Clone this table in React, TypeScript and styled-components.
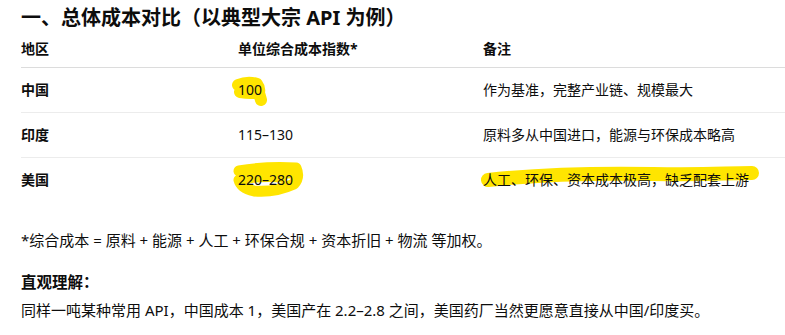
import styled, { createGlobalStyle } from 'styled-components';

const Global = createGlobalStyle`
  body {
    margin: 0;
    background: #fff;
    color: #0d0d0d;
    font-family: "Noto Sans", "Noto Sans CJK SC", sans-serif;
  }
`;

const Page = styled.div`
  width: 785px;
  height: 335px;
  overflow: hidden;
  padding: 4px 0 0 21px;
  box-sizing: border-box;
`;

const Title = styled.h2`
  margin: 0;
  font-size: 20px;
  line-height: 28px;
  font-weight: 700;
`;

const Table = styled.div`
  width: 780px;
  font-size: 14px;
  line-height: 20px;
`;

const Row = styled.div<{ $head?: boolean; $last?: boolean }>`
  display: grid;
  grid-template-columns: 217px 245px 1fr;
  padding: ${(p) => (p.$head ? '7px 0 8px' : '12px 0 12px')};
  border-bottom: 1px solid
    ${(p) => (p.$last ? 'transparent' : p.$head ? '#dcdcdc' : '#ececec')};
  font-weight: ${(p) => (p.$head ? 700 : 400)};
`;

const Region = styled.div`
  font-weight: 700;
`;

const Cell = styled.div``;

const Mark = styled.span`
  position: relative;
  display: inline-block;
`;

const MarkText = styled.span`
  position: relative;
  z-index: 1;
`;

const Stroke = styled.svg<{ $x: number; $y: number }>`
  position: absolute;
  left: ${(p) => p.$x}px;
  top: ${(p) => p.$y}px;
  overflow: visible;
  z-index: 0;
`;

const Note = styled.p`
  margin: 26px 0 0;
  font-size: 15px;
  line-height: 22px;
`;

const Sub = styled.h4`
  margin: 20px 0 0;
  font-size: 15.5px;
  line-height: 22px;
  font-weight: 700;
`;

const Para = styled.p`
  margin: 6px 0 0;
  font-size: 15px;
  line-height: 22px;
`;

const YELLOW = '#ffe500';

function Highlight({
  children,
  d,
  x,
  y,
  w,
  h,
  sw,
}: {
  children: React.ReactNode;
  d: string;
  x: number;
  y: number;
  w: number;
  h: number;
  sw: number;
}) {
  return (
    <Mark>
      <Stroke $x={x} $y={y} width={w} height={h}>
        <path
          d={d}
          fill="none"
          stroke={YELLOW}
          strokeWidth={sw}
          strokeLinecap="round"
          strokeLinejoin="round"
        />
      </Stroke>
      <MarkText>{children}</MarkText>
    </Mark>
  );
}

export default function App() {
  return (
    <>
      <Global />
      <Page>
        <Title>一、总体成本对比（以典型大宗 API 为例）</Title>
        <Table>
          <Row $head>
            <Cell>地区</Cell>
            <Cell>单位综合成本指数*</Cell>
            <Cell>备注</Cell>
          </Row>
          <Row>
            <Region>中国</Region>
            <Cell>
              <Highlight
                x={-6}
                y={-3}
                w={40}
                h={30}
                sw={12}
                d="M6 8 Q16 4 25 7 Q28 11 27 15 Q20 17 8 15 M25 9 L29 23"
              >
                100
              </Highlight>
            </Cell>
            <Cell>作为基准，完整产业链、规模最大</Cell>
          </Row>
          <Row>
            <Region>印度</Region>
            <Cell>115–130</Cell>
            <Cell>原料多从中国进口，能源与环保成本略高</Cell>
          </Row>
          <Row $last>
            <Region>美国</Region>
            <Cell>
              <Highlight
                x={-6}
                y={-5}
                w={74}
                h={34}
                sw={11}
                d="M7 6 Q36 1 64 3 Q68 12 62 19 Q42 28 22 26 Q9 23 7 15 Q24 10 50 12 M12 8 L58 8"
              >
                220–280
              </Highlight>
            </Cell>
            <Cell>
              <Highlight
                x={0}
                y={-2}
                w={276}
                h={22}
                sw={14}
                d="M5 12 C60 6 110 5 170 6 S240 5 269 5"
              >
                人工、环保、资本成本极高，缺乏配套上游
              </Highlight>
            </Cell>
          </Row>
        </Table>
        <Note>*综合成本 = 原料 + 能源 + 人工 + 环保合规 + 资本折旧 + 物流 等加权。</Note>
        <Sub>直观理解：</Sub>
        <Para>
          同样一吨某种常用 API，中国成本 1，美国产在 2.2–2.8 之间，美国药厂当然更愿意直接从中国/印度买。
        </Para>
      </Page>
    </>
  );
}
